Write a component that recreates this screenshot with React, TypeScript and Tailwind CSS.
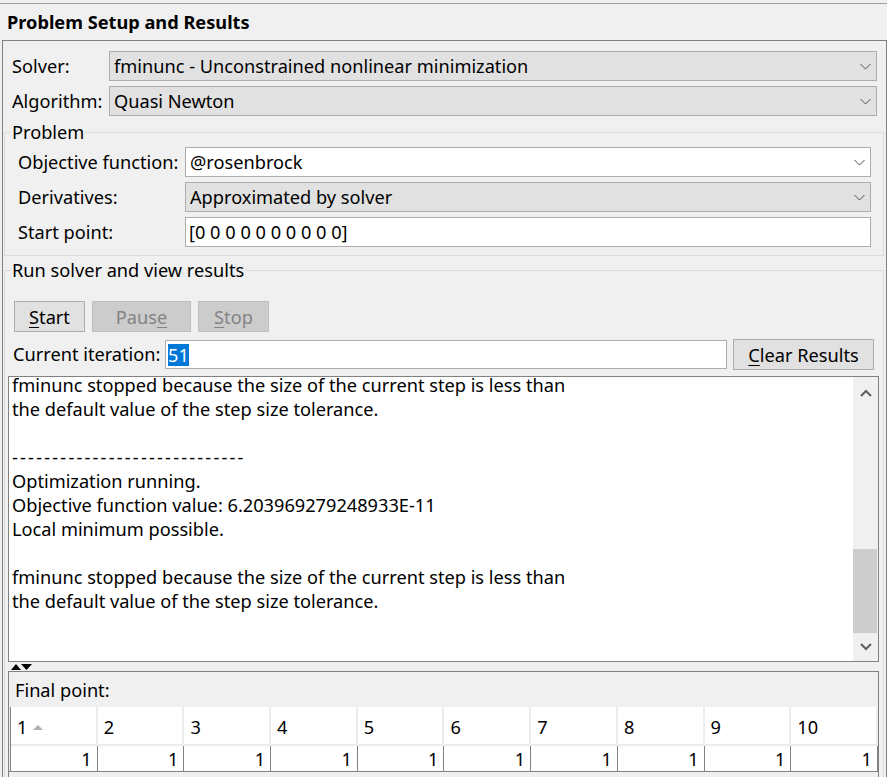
import React from 'react';

// Optimization tool panel: problem setup, run controls, output log and final point table
const outputLines = [
  'fminunc stopped because the size of the current step is less than',
  'the default value of the step size tolerance.',
  '',
  '-----------------------------',
  'Optimization running.',
  'Objective function value: 6.203969279248933E-11',
  'Local minimum possible.',
  '',
  'fminunc stopped because the size of the current step is less than',
  'the default value of the step size tolerance.',
  '',
  '',
];

const finalPoint = [1, 1, 1, 1, 1, 1, 1, 1, 1, 1];

const Chevron = () => (
  <svg width="11" height="7" viewBox="0 0 11 7" className="shrink-0">
    <path d="M0.5 1 L5.5 6 L10.5 1" fill="none" stroke="#505050" strokeWidth="1" />
  </svg>
);

const Combo = ({ value, white }: { value: string; white?: boolean }) => (
  <div
    className={`flex-1 h-[30px] flex items-center justify-between pl-[4px] pr-[5px] border border-[#adadad] ${
      white ? 'bg-white' : 'bg-[#e1e1e1]'
    }`}
  >
    <span className="whitespace-nowrap">{value}</span>
    <Chevron />
  </div>
);

const App = () => {
  return (
    <div className="w-[887px] h-[777px] overflow-hidden bg-[#f0f0f0] text-black text-[18.2px] leading-[24px] font-['Noto_Sans','Liberation_Sans',sans-serif]">
      <div className="h-[3px]" />
      <div className="h-[37px] border-t border-[#a0a0a0] flex items-center pl-[7px] font-bold">
        Problem Setup and Results
      </div>

      {/* Main panel */}
      <div className="ml-[2px] w-[885px] h-[737px] border-l border-t border-r border-[#7f7f7f] flex flex-col">
        <div className="mt-[10px] h-[30px] flex items-center pl-[9px] pr-[9px]">
          <span className="w-[97px] shrink-0">Solver:</span>
          <Combo value="fminunc - Unconstrained nonlinear minimization" />
        </div>
        <div className="mt-[5px] h-[30px] flex items-center pl-[9px] pr-[9px]">
          <span className="w-[97px] shrink-0">Algorithm:</span>
          <Combo value="Quasi Newton" />
        </div>

        {/* Problem group */}
        <fieldset className="mt-[4px] ml-[1px] mr-[2px] border border-[#dcdcdc] pb-[8px]">
          <legend className="ml-[6px] px-[1px] leading-[24px]">Problem</legend>
          <div className="mt-[3px] flex flex-col gap-[5px] pl-[13px] pr-[12px]">
            <div className="h-[30px] flex items-center">
              <span className="w-[167px] shrink-0">Objective function:</span>
              <Combo value="@rosenbrock" white />
            </div>
            <div className="h-[30px] flex items-center">
              <span className="w-[167px] shrink-0">Derivatives:</span>
              <Combo value="Approximated by solver" />
            </div>
            <div className="h-[30px] flex items-center">
              <span className="w-[167px] shrink-0">Start point:</span>
              <div className="flex-1 h-[30px] flex items-center pl-[3px] border border-[#adadad] bg-white">
                [0 0 0 0 0 0 0 0 0 0]
              </div>
            </div>
          </div>
        </fieldset>

        {/* Run solver group */}
        <fieldset className="mt-[2px] ml-[1px] mr-[2px] border border-b-0 border-[#dcdcdc] flex-1 min-h-0 flex flex-col">
          <legend className="ml-[6px] px-[1px] leading-[24px]">Run solver and view results</legend>
          <div className="mt-[19px] flex items-center gap-[7px] pl-[9px]">
            <button className="w-[71px] h-[31px] border border-[#adadad] bg-[#e1e1e1] leading-[22px]">
              <span className="underline underline-offset-[3px]">S</span>tart
            </button>
            <button className="w-[99px] h-[31px] border border-[#bfbfbf] bg-[#cccccc] text-[#838383] leading-[22px]">
              Paus<span className="underline underline-offset-[3px]">e</span>
            </button>
            <button className="w-[71px] h-[31px] border border-[#bfbfbf] bg-[#cccccc] text-[#838383] leading-[22px]">
              <span className="underline underline-offset-[3px]">S</span>top
            </button>
          </div>

          <div className="mt-[7px] flex items-center pl-[8px] pr-[9px]">
            <span className="w-[152px] shrink-0 -mt-[2px]">Current iteration:</span>
            <div className="flex-1 h-[29px] flex items-center pl-[2px] border border-[#adadad] bg-white">
              <span className="bg-[#0078d7] text-white leading-[22px]">51</span>
            </div>
            <button className="ml-[6px] w-[141px] h-[31px] border border-[#adadad] bg-[#e1e1e1] leading-[22px]">
              <span className="underline underline-offset-[3px]">C</span>lear Results
            </button>
          </div>

          {/* Output log */}
          <div className="mt-[6px] ml-[3px] mr-[4px] h-[286px] border border-[#828282] bg-white flex">
            <div className="flex-1 overflow-hidden pl-[3px]">
              <div className="-mt-[4px]">
                {outputLines.map((line, i) => (
                  <div key={i} className={`h-[24px] whitespace-pre ${line.startsWith('---') ? 'tracking-[2.2px]' : ''}`}>
                    {line}
                  </div>
                ))}
              </div>
            </div>
            <div className="w-[25px] bg-[#f0f0f0] flex flex-col">
              <div className="h-[32px] flex items-center justify-center">
                <svg width="12" height="8" viewBox="0 0 12 8">
                  <path d="M1 7 L6 2 L11 7" fill="none" stroke="#606060" strokeWidth="2" />
                </svg>
              </div>
              <div className="h-[140px]" />
              <div className="h-[84px] bg-[#cdcdcd] mr-[1px]" />
              <div className="flex-1 flex items-center justify-center">
                <svg width="12" height="8" viewBox="0 0 12 8">
                  <path d="M1 1 L6 6 L11 1" fill="none" stroke="#606060" strokeWidth="2" />
                </svg>
              </div>
            </div>
          </div>

          {/* Splitter */}
          <div className="h-[9px] flex items-center pl-[6px]">
            <svg width="22" height="6" viewBox="0 0 22 6">
              <path d="M0 6 L5 0 L10 6 Z" fill="#000" />
              <path d="M10 0 L21 0 L15.5 6 Z" fill="#000" />
            </svg>
          </div>

          {/* Final point */}
          <div className="ml-[3px] mr-[4px] flex-1 border-l border-t border-r border-[#828282] flex flex-col">
            <div className="h-[35px] flex items-center pl-[6px]">Final point:</div>
            <div className="ml-[1px] grid grid-cols-10 bg-white border-l border-[#828282]">
              {finalPoint.map((_, i) => (
                <div
                  key={i}
                  className="h-[39px] flex items-center pl-[6px] pt-[3px] border-r-2 border-b-2 border-[#ececec]"
                >
                  {i + 1}
                  {i === 0 && (
                    <svg width="10" height="5" viewBox="0 0 10 5" className="ml-[6px]">
                      <path d="M0 5 L5 0 L10 5 Z" fill="#b0b0a8" />
                    </svg>
                  )}
                </div>
              ))}
              {finalPoint.map((v, i) => (
                <div
                  key={i}
                  className="h-[25px] flex items-center justify-end pr-[5px] border-r border-[#828282]"
                >
                  {v}
                </div>
              ))}
            </div>
            <div className="border-t border-[#828282]" />
          </div>
        </fieldset>
      </div>
    </div>
  );
};

export default App;
